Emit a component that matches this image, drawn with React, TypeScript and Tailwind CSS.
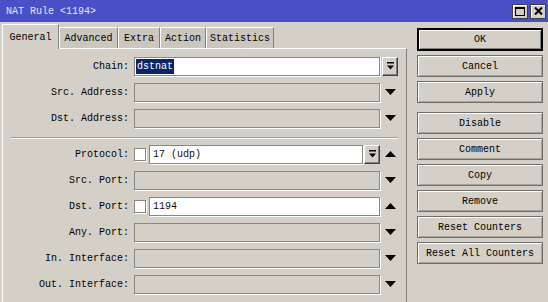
import React from 'react'

const mono = "font-['Liberation_Mono','DejaVu_Sans_Mono',monospace]"

function DownArrow() {
  return (
    <svg width="11" height="6" viewBox="0 0 11 6">
      <polygon points="0,0 11,0 5.5,6" fill="#000" />
    </svg>
  )
}

function UpArrow() {
  return (
    <svg width="11" height="6" viewBox="0 0 11 6">
      <polygon points="0,6 11,6 5.5,0" fill="#000" />
    </svg>
  )
}

function DropButton() {
  return (
    <div className="w-[16px] h-[19px] shrink-0 flex items-center justify-center border border-t-white border-l-white border-r-[#404040] border-b-[#404040] shadow-[inset_-1px_-1px_0_#808080] bg-[#d4d0c8]">
      <svg width="7" height="8" viewBox="0 0 7 8">
        <rect x="0" y="0" width="7" height="1.5" fill="#000" />
        <polygon points="0,3.5 7,3.5 3.5,7.5" fill="#000" />
      </svg>
    </div>
  )
}

function Field({ value, enabled, selected }: { value?: string; enabled?: boolean; selected?: boolean }) {
  return (
    <div
      className={
        'flex-1 min-w-0 h-[19px] border border-[#888] shadow-[1px_1px_0_#fff] flex items-center pl-[1px] ' +
        (enabled ? 'bg-white' : 'bg-[#d4d0c8]')
      }
    >
      {value &&
        (selected ? (
          <span className="bg-[#0a246a] text-white px-[1px] leading-[15px]">{value}</span>
        ) : (
          <span className="pl-[2px] text-[#111]">{value}</span>
        ))}
    </div>
  )
}

function Checkbox() {
  return <div className="w-[12px] h-[13px] shrink-0 bg-white border border-[#888] shadow-[1px_1px_0_#fff]" />
}

type RowProps = {
  label: string
  children: React.ReactNode
  icon?: React.ReactNode
}

function Row({ label, children, icon }: RowProps) {
  return (
    <div className="flex items-center h-[20px]">
      <div className="w-[126px] text-right text-black whitespace-pre">{label}</div>
      <div className="ml-[5px] w-[246px] flex items-center">{children}</div>
      <div className="ml-[2px] w-[16px] flex items-center justify-center">{icon}</div>
    </div>
  )
}

function Tab({ label, width, active }: { label: string; width: number; active?: boolean }) {
  return (
    <div
      style={{ width }}
      className={
        'flex items-center justify-center border-l border-t border-l-white border-t-white border-r border-r-[#808080] ' +
        (active ? 'h-[25px] -mb-px relative z-10 bg-[#d4d0c8]' : 'h-[21px] bg-[#cbc7bf]')
      }
    >
      {label}
    </div>
  )
}

function Btn({ label, isDefault }: { label: string; isDefault?: boolean }) {
  return (
    <div
      className={
        'w-[126px] flex items-center justify-center text-black ' +
        (isDefault
          ? 'h-[23px] border-2 border-black shadow-[inset_1px_1px_0_#fff,inset_-1px_-1px_0_#808080]'
          : 'h-[22px] border border-[#6e6e6e] shadow-[inset_1px_1px_0_#fff,inset_-1px_-1px_0_#a8a49c]')
      }
    >
      {label}
    </div>
  )
}

export default function App() {
  return (
    <div className={'w-[548px] h-[302px] overflow-hidden bg-[#d4d0c8] text-[10px] ' + mono}>
      {/* Title bar */}
      <div className="h-[22px] bg-[#4a4fc8] flex items-center pl-[6px] pr-[2px]">
        <span className="text-[#e4e4f4] flex-1">NAT Rule &lt;1194&gt;</span>
        <div className="flex gap-[2px]">
          <div className="w-[16px] h-[15px] bg-[#d4d0c8] border border-[#404040] shadow-[inset_1px_1px_0_#fff] flex items-center justify-center">
            <div className="w-[10px] h-[9px] border border-black border-t-2" />
          </div>
          <div className="w-[16px] h-[15px] bg-[#d4d0c8] border border-[#404040] shadow-[inset_1px_1px_0_#fff] flex items-center justify-center">
            <svg width="9" height="8" viewBox="0 0 9 8">
              <path d="M1 0.5 L8 7.5 M8 0.5 L1 7.5" stroke="#000" strokeWidth="2" />
            </svg>
          </div>
        </div>
      </div>

      <div className="flex">
        {/* Left: tabs + panel */}
        <div className="w-[407px] pl-[2px] pt-[2px]">
          <div className="flex items-end h-[24px] text-black">
            <Tab label="General" width={57} active />
            <Tab label="Advanced" width={59} />
            <Tab label="Extra" width={42} />
            <Tab label="Action" width={46} />
            <Tab label="Statistics" width={68} />
          </div>
          <div className="h-[260px] border-t border-l border-t-white border-l-white border-r border-r-[#808080] pt-[7px]">
            <div className="flex flex-col gap-[6px]">
              <Row label="Chain:" icon={<DropButton />}>
                <Field value="dstnat" enabled selected />
              </Row>
              <Row label="Src. Address:" icon={<DownArrow />}>
                <Field />
              </Row>
              <Row label="Dst. Address:" icon={<DownArrow />}>
                <Field />
              </Row>
            </div>

            <div className="mt-[9px] ml-[8px] w-[387px] h-[2px] border-t border-t-[#a09c94] border-b border-b-white" />

            <div className="mt-[5px] flex flex-col gap-[6px]">
              <Row label="Protocol:" icon={<UpArrow />}>
                <Checkbox />
                <div className="ml-[3px] flex-1 flex items-center gap-[1px]">
                  <Field value="17 (udp)" enabled />
                  <DropButton />
                </div>
              </Row>
              <Row label="Src. Port:" icon={<DownArrow />}>
                <Field />
              </Row>
              <Row label="Dst. Port:" icon={<UpArrow />}>
                <Checkbox />
                <div className="ml-[3px] flex-1 flex items-center">
                  <Field value="1194" enabled />
                </div>
              </Row>
              <Row label="Any. Port:" icon={<DownArrow />}>
                <Field />
              </Row>
              <Row label="In. Interface:" icon={<DownArrow />}>
                <Field />
              </Row>
              <Row label="Out. Interface:" icon={<DownArrow />}>
                <Field />
              </Row>
            </div>
          </div>
        </div>

        {/* Right: buttons */}
        <div className="ml-[10px] pt-[6px] flex flex-col">
          <Btn label="OK" isDefault />
          <div className="mt-[4px] flex flex-col gap-[4px]">
            <Btn label="Cancel" />
            <Btn label="Apply" />
          </div>
          <div className="mt-[9px] flex flex-col gap-[4px]">
            <Btn label="Disable" />
            <Btn label="Comment" />
            <Btn label="Copy" />
            <Btn label="Remove" />
            <Btn label="Reset Counters" />
            <Btn label="Reset All Counters" />
          </div>
        </div>
      </div>
    </div>
  )
}
